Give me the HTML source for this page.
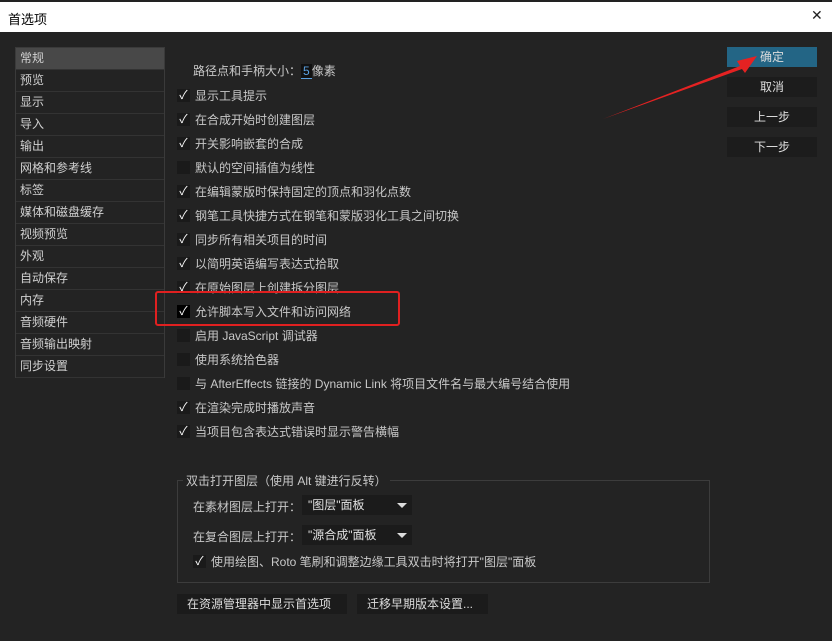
<!DOCTYPE html>
<html><head><meta charset="utf-8"><style>
*{margin:0;padding:0;box-sizing:border-box}
body{width:832px;height:641px;background:#232323;font-family:"Liberation Sans","Noto Sans CJK SC",sans-serif;font-size:12px;color:#c8c8c8;position:relative;overflow:hidden}
.title{position:absolute;left:0;top:0;width:832px;height:32px;background:#fff;border-top:2px solid #222;color:#000;font-size:13px}
.title span{position:absolute;left:8px;top:7px}
.title .x{left:811px;top:5px;font-size:14px;font-weight:100;color:#222}
.side{position:absolute;left:15px;top:47px;width:150px;border:1px solid #3a3a3a;border-bottom:none}
.side div{height:22px;line-height:21px;padding-left:4px;border-bottom:1px solid #333;color:#d0d0d0}
.side .sel{background:#484848}
.btn{position:absolute;left:727px;width:90px;height:20px;background:#1c1c1c;text-align:center;line-height:20px;color:#ddd}
.row{position:absolute;left:177px;height:14px;line-height:14px}
.cb{position:absolute;left:0;top:0;width:13px;height:13px;background:#1a1a1a;color:#fff;font-size:12px;line-height:13px;text-align:center}
.row span.t{position:absolute;left:18px;top:0;white-space:nowrap}
.grp{position:absolute;left:177px;top:480px;width:533px;height:103px;border:1px solid #3c3c3c}
.leg{position:absolute;left:183px;top:472px;background:#232323;padding:0 3px}
.dd{position:absolute;left:302px;width:110px;height:20px;background:#1b1b1b;line-height:20px;padding-left:6px;color:#e0e0e0}
.dd:after{content:"";position:absolute;right:5px;top:8px;border-left:5px solid transparent;border-right:5px solid transparent;border-top:5px solid #ddd}
.bb{position:absolute;top:594px;height:20px;background:#1b1b1b;line-height:20px;padding-left:10px;color:#ddd}
</style></head><body>
<div class="title"><span>首选项</span><span class="x">✕</span></div>
<div class="side">
<div class="sel">常规</div><div>预览</div><div>显示</div><div>导入</div><div>输出</div><div>网格和参考线</div><div>标签</div><div>媒体和磁盘缓存</div><div>视频预览</div><div>外观</div><div>自动保存</div><div>内存</div><div>音频硬件</div><div>音频输出映射</div><div>同步设置</div>
</div>
<div class="btn" style="top:47px;background:#236585">确定</div>
<div class="btn" style="top:77px">取消</div>
<div class="btn" style="top:107px">上一步</div>
<div class="btn" style="top:137px">下一步</div>
<div style="position:absolute;left:193px;top:62px">路径点和手柄大小：<span style="background:#111;color:#5aa0e0;padding:0 2px;border-bottom:1px solid #5aa0e0">5</span>像素</div>
<div class="row" style="top:89px"><div class="cb">✓</div><span class="t">显示工具提示</span></div>
<div class="row" style="top:113px"><div class="cb">✓</div><span class="t">在合成开始时创建图层</span></div>
<div class="row" style="top:137px"><div class="cb">✓</div><span class="t">开关影响嵌套的合成</span></div>
<div class="row" style="top:161px"><div class="cb"></div><span class="t">默认的空间插值为线性</span></div>
<div class="row" style="top:185px"><div class="cb">✓</div><span class="t">在编辑蒙版时保持固定的顶点和羽化点数</span></div>
<div class="row" style="top:209px"><div class="cb">✓</div><span class="t">钢笔工具快捷方式在钢笔和蒙版羽化工具之间切换</span></div>
<div class="row" style="top:233px"><div class="cb">✓</div><span class="t">同步所有相关项目的时间</span></div>
<div class="row" style="top:257px"><div class="cb">✓</div><span class="t">以简明英语编写表达式拾取</span></div>
<div class="row" style="top:281px"><div class="cb">✓</div><span class="t">在原始图层上创建拆分图层</span></div>
<div class="row" style="top:305px"><div class="cb" style="background:#000">✓</div><span class="t">允许脚本写入文件和访问网络</span></div>
<div class="row" style="top:329px"><div class="cb"></div><span class="t">启用 JavaScript 调试器</span></div>
<div class="row" style="top:353px"><div class="cb"></div><span class="t">使用系统拾色器</span></div>
<div class="row" style="top:377px"><div class="cb"></div><span class="t">与 AfterEffects 链接的 Dynamic Link 将项目文件名与最大编号结合使用</span></div>
<div class="row" style="top:401px"><div class="cb">✓</div><span class="t">在渲染完成时播放声音</span></div>
<div class="row" style="top:425px"><div class="cb">✓</div><span class="t">当项目包含表达式错误时显示警告横幅</span></div>
<div style="position:absolute;left:155px;top:291px;width:245px;height:35px;border:2px solid #e02020;border-radius:3px"></div>
<div class="grp"></div>
<div class="leg">双击打开图层（使用 Alt 键进行反转）</div>
<div style="position:absolute;left:193px;top:498px">在素材图层上打开：</div>
<div class="dd" style="top:495px">"图层"面板</div>
<div style="position:absolute;left:193px;top:528px">在复合图层上打开：</div>
<div class="dd" style="top:525px">"源合成"面板</div>
<div class="row" style="top:555px;left:193px"><div class="cb">✓</div><span class="t">使用绘图、Roto 笔刷和调整边缘工具双击时将打开"图层"面板</span></div>
<div class="bb" style="left:177px;width:170px">在资源管理器中显示首选项</div>
<div class="bb" style="left:357px;width:131px">迁移早期版本设置...</div>
<svg style="position:absolute;left:0;top:0" width="832" height="641"><polygon points="603,119 740,66 737,61 757,56 745,73 742,69" fill="#e52222"/></svg>
</body></html>
